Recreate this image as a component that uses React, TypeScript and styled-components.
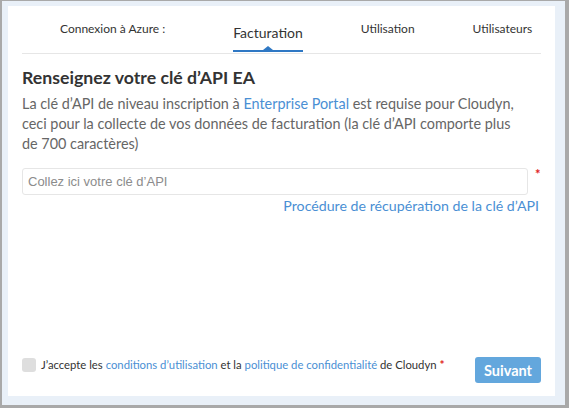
import React, { useState } from "react";
import styled, { createGlobalStyle } from "styled-components";

const GlobalStyle = createGlobalStyle`
  html, body {
    margin: 0;
    padding: 0;
    background: #ffffff;
  }
  * {
    box-sizing: border-box;
  }
`;

const FONT = `"Lato", "Open Sans", "Noto Sans", sans-serif`;
const LINK = "#4a8fd4";

const Frame = styled.div`
  width: 569px;
  height: 408px;
  background: #e9f0f8;
  border-style: solid;
  border-color: #a9a9a9;
  border-width: 1px 4px 3px 2px;
  padding: 5px 10px 9px 6px;
  font-family: ${FONT};
`;

const Panel = styled.div`
  height: 100%;
  background: #ffffff;
  padding: 0 14px 13px 14px;
  display: flex;
  flex-direction: column;
`;

const TabRow = styled.div`
  height: 48px;
  display: flex;
  align-items: flex-start;
  padding: 15px 0 0 38px;
  gap: 58px;
  border-bottom: 1px solid #e6e6e6;
`;

const Tab = styled.div<{ $active?: boolean; $extra?: number }>`
  position: relative;
  color: #333333;
  font-size: ${(p) => (p.$active ? "14px" : "12px")};
  line-height: ${(p) => (p.$active ? "18px" : "16px")};
  margin-top: ${(p) => (p.$active ? "3px" : "0")};
  margin-right: ${(p) => p.$extra ?? 0}px;
  padding-bottom: ${(p) => (p.$active ? "8px" : "0")};
  border-bottom: ${(p) => (p.$active ? "2px solid #2f78c4" : "none")};
  cursor: pointer;
  white-space: nowrap;

  ${(p) =>
    p.$active &&
    `
    &::after {
      content: "";
      position: absolute;
      left: 50%;
      bottom: 0;
      transform: translateX(-50%);
      border-left: 5px solid transparent;
      border-right: 5px solid transparent;
      border-bottom: 4px solid #2f78c4;
    }
  `}
`;

const Heading = styled.h2`
  margin: 13px 0 0 0;
  font-size: 17.7px;
  line-height: 22px;
  font-weight: 700;
  color: #333333;
`;

const Description = styled.p`
  margin: 5px 0 0 0;
  font-size: 14.4px;
  line-height: 20px;
  color: #666666;
`;

const Link = styled.a`
  color: ${LINK};
  text-decoration: none;
  cursor: pointer;
`;

const FieldRow = styled.div`
  margin-top: 14px;
  display: flex;
  align-items: flex-start;
`;

const KeyInput = styled.input`
  width: 506px;
  height: 27px;
  border: 1px solid #e6e6e6;
  border-radius: 3px;
  padding: 0 5px;
  font-family: "Liberation Sans", Arial, sans-serif;
  font-size: 13px;
  color: #333333;
  outline: none;

  &::placeholder {
    color: #8c8c8c;
  }
`;

const Required = styled.span<{ $size?: number }>`
  color: #e02020;
  font-size: ${(p) => p.$size ?? 13}px;
  line-height: 1;
  margin-left: ${(p) => (p.$size ? 3 : 7)}px;
  font-weight: 700;
`;

const HelpLink = styled(Link)`
  align-self: flex-end;
  margin-top: 2px;
  font-size: 14.2px;
  line-height: 18px;
  margin-right: 2px;
`;

const Footer = styled.div`
  margin-top: auto;
  display: flex;
  align-items: flex-start;
  justify-content: space-between;
`;

const Consent = styled.label`
  display: flex;
  align-items: center;
  gap: 5px;
  margin-top: 1px;
  font-size: 11.3px;
  line-height: 14px;
  color: #333333;
  cursor: pointer;
`;

const Box = styled.span<{ $checked: boolean }>`
  width: 14px;
  height: 14px;
  border-radius: 3px;
  background: ${(p) => (p.$checked ? "#5ba3dc" : "#dedede")};
`;

const NextButton = styled.button`
  width: 66px;
  height: 26px;
  border: none;
  border-radius: 3px;
  background: #63a7dd;
  color: #ffffff;
  font-family: ${FONT};
  font-size: 14.5px;
  font-weight: 700;
  cursor: pointer;
`;

const tabs = ["Connexion à Azure :", "Facturation", "Utilisation", "Utilisateurs"];

export default function App() {
  const [checked, setChecked] = useState(false);
  const [apiKey, setApiKey] = useState("");

  return (
    <>
      <GlobalStyle />
      <Frame>
        <Panel>
          <TabRow>
            {tabs.map((t, i) => (
              <Tab key={t} $active={i === 1} $extra={i === 0 ? 10 : 0}>
                {t}
              </Tab>
            ))}
          </TabRow>

          <Heading>Renseignez votre clé d’API EA</Heading>
          <Description>
            La clé d’API de niveau inscription à <Link>Enterprise Portal</Link> est requise pour Cloudyn,
            <br />
            ceci pour la collecte de vos données de facturation (la clé d’API comporte plus
            <br />
            de 700 caractères)
          </Description>

          <FieldRow>
            <KeyInput
              placeholder="Collez ici votre clé d’API"
              value={apiKey}
              onChange={(e) => setApiKey(e.target.value)}
            />
            <Required>*</Required>
          </FieldRow>
          <HelpLink>Procédure de récupération de la clé d’API</HelpLink>

          <Footer>
            <Consent onClick={() => setChecked(!checked)}>
              <Box $checked={checked} />
              <span>
                J’accepte les <Link>conditions d’utilisation</Link> et la{" "}
                <Link>politique de confidentialité</Link> de Cloudyn
                <Required $size={12}>*</Required>
              </span>
            </Consent>
            <NextButton>Suivant</NextButton>
          </Footer>
        </Panel>
      </Frame>
    </>
  );
}
